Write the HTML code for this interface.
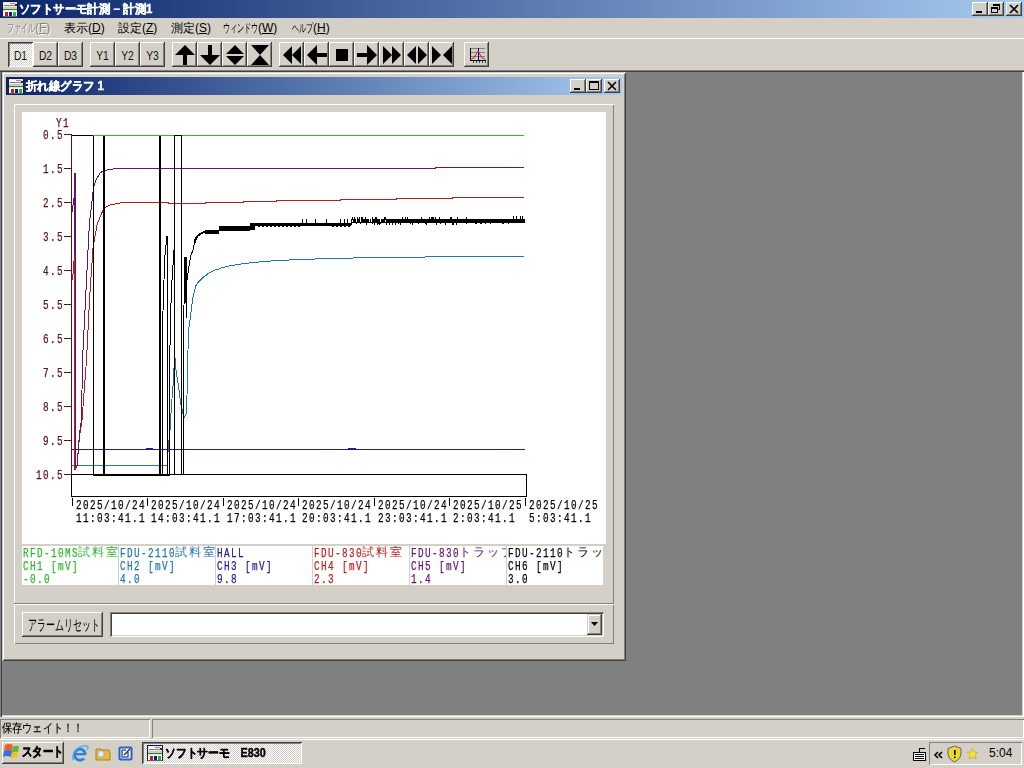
<!DOCTYPE html>
<html><head><meta charset="utf-8">
<style>
*{box-sizing:border-box;margin:0;padding:0}
html,body{width:1024px;height:768px;overflow:hidden;background:#D4D0C8;font-family:"Liberation Sans",sans-serif;font-size:12px;color:#000}
.a{position:absolute}
.title{left:0;top:0;width:1024px;height:18px;background:linear-gradient(to right,#0A246A,#A6CAF0)}
.ttext{color:#fff;font-weight:bold;font-size:12px;line-height:18px;white-space:nowrap;-webkit-text-stroke:0.4px #fff}
.cbtn{width:16px;height:14px;background:#D4D0C8;box-shadow:inset -1px -1px #404040,inset 1px 1px #fff,inset -2px -2px #808080}
.menu{white-space:nowrap;font-size:12px;line-height:14px}
.tb{width:24px;height:24px;background:#D4D0C8;box-shadow:inset -1px -1px #404040,inset 1px 1px #fff,inset -2px -2px #808080;text-align:center;font-size:12px;line-height:24px}
.tbd{background:#eceae6;background-image:repeating-conic-gradient(#fff 0 25%,#D4D0C8 0 50%);background-size:2px 2px;box-shadow:inset 1px 1px #404040,inset -1px -1px #fff,inset 2px 2px #808080}
.mono{font-family:"Liberation Mono",monospace}
.yl{right:962px;font-family:"Liberation Mono",monospace;font-size:13px;letter-spacing:-0.8px;line-height:16px;color:#5A1414;white-space:nowrap;text-align:right}
.xl{font-family:"Liberation Mono",monospace;font-size:13px;letter-spacing:-0.8px;line-height:13px;color:#000;white-space:nowrap}
.lg{top:546px;width:96px;height:39px;overflow:hidden;font-family:"Liberation Mono",monospace;font-size:13px;letter-spacing:-0.8px;line-height:13px;white-space:nowrap}
.j{font-size:13px;letter-spacing:1px}
.tbt{width:25px;height:25px;text-align:center;line-height:25px;font-size:12px;transform:translateY(2px) scaleX(0.86);color:#101010}
.hw{display:inline-block;overflow:visible;white-space:nowrap}
.hw>span{display:inline-block;transform:scaleX(0.6);transform-origin:left}
.mt{font-family:"Liberation Mono",monospace;font-size:13px;letter-spacing:1.92px;line-height:13px;white-space:nowrap;transform:scaleX(0.72);transform-origin:0 0;-webkit-text-stroke:0.25px currentColor}
.jt{font-size:12px;letter-spacing:2px;line-height:13px;white-space:nowrap}
</style></head><body>
<!-- Title bar -->
<div class="a title"></div>
<div class="a" id="appicon" style="left:2px;top:1px;width:16px;height:16px"></div>
<div class="a ttext" style="left:19px;top:0;transform:scaleX(0.95);transform-origin:left">ソフトサーモ計測 − 計測1</div>
<div class="a cbtn" style="left:972px;top:2px"></div>
<div class="a cbtn" style="left:988px;top:2px"></div>
<div class="a cbtn" style="left:1006px;top:2px"></div>

<!-- Menu -->
<div class="a menu" style="left:7px;top:21px;color:#808080;text-shadow:1px 1px #fff"><span class="hw" style="width:7px"><span>フ</span></span><span class="hw" style="width:7px"><span>ァ</span></span><span class="hw" style="width:7px"><span>イ</span></span><span class="hw" style="width:7px"><span>ル</span></span>(<u>F</u>)</div>
<div class="a menu" style="left:64px;top:21px">表示(<u>D</u>)</div>
<div class="a menu" style="left:118px;top:21px">設定(<u>Z</u>)</div>
<div class="a menu" style="left:171px;top:21px">測定(<u>S</u>)</div>
<div class="a menu" style="left:223px;top:21px"><span class="hw" style="width:7px"><span>ウ</span></span><span class="hw" style="width:7px"><span>ィ</span></span><span class="hw" style="width:7px"><span>ン</span></span><span class="hw" style="width:7px"><span>ド</span></span><span class="hw" style="width:7px"><span>ウ</span></span>(<u>W</u>)</div>
<div class="a menu" style="left:292px;top:21px"><span class="hw" style="width:7px"><span>ヘ</span></span><span class="hw" style="width:7px"><span>ル</span></span><span class="hw" style="width:7px"><span>プ</span></span>(<u>H</u>)</div>

<!-- Toolbar -->
<div class="a" style="left:0;top:38px;width:1024px;height:1px;background:#fff"></div>
<div class="a" style="left:0;top:70px;width:1024px;height:1px;background:#808080"></div>
<div class="a" style="left:0;top:71px;width:1024px;height:1px;background:#404040"></div>

<!-- UI -->
<div class="a tbd" style="left:8px;top:42px;width:25px;height:25px"></div>
<div class="a tb" style="left:33px;top:42px;width:25px;height:25px"></div>
<div class="a tb" style="left:58px;top:42px;width:25px;height:25px"></div>
<div class="a tb" style="left:90px;top:42px;width:25px;height:25px"></div>
<div class="a tb" style="left:115px;top:42px;width:25px;height:25px"></div>
<div class="a tb" style="left:140px;top:42px;width:25px;height:25px"></div>
<div class="a tb" style="left:172px;top:42px;width:25px;height:25px"></div>
<div class="a tb" style="left:197px;top:42px;width:25px;height:25px"></div>
<div class="a tb" style="left:222px;top:42px;width:25px;height:25px"></div>
<div class="a tb" style="left:247px;top:42px;width:25px;height:25px"></div>
<div class="a tb" style="left:279px;top:42px;width:25px;height:25px"></div>
<div class="a tb" style="left:304px;top:42px;width:25px;height:25px"></div>
<div class="a tb" style="left:329px;top:42px;width:25px;height:25px"></div>
<div class="a tb" style="left:354px;top:42px;width:25px;height:25px"></div>
<div class="a tb" style="left:379px;top:42px;width:25px;height:25px"></div>
<div class="a tb" style="left:404px;top:42px;width:25px;height:25px"></div>
<div class="a tb" style="left:429px;top:42px;width:25px;height:25px"></div>
<div class="a tb" style="left:464px;top:42px;width:25px;height:25px"></div>
<div class="a tbt" style="left:8px;top:42px">D1</div>
<div class="a tbt" style="left:33px;top:42px">D2</div>
<div class="a tbt" style="left:58px;top:42px">D3</div>
<div class="a tbt" style="left:90px;top:42px">Y1</div>
<div class="a tbt" style="left:115px;top:42px">Y2</div>
<div class="a tbt" style="left:140px;top:42px">Y3</div>
<svg class="a" style="left:0;top:0" width="1024" height="72" viewBox="0 0 1024 72">
<path d="M175,55 L185,45 L195,55 L187,55 L187,65 L183,65 L183,55 Z" fill="#000"/>
<path d="M208,45 L212,45 L212,55 L220,55 L210,65 L200,55 L208,55 Z" fill="#000"/>
<path d="M226,54 L235,45 L244,54 Z M226,56 L244,56 L235,65 Z" fill="#000"/>
<path d="M251,45 L269,45 L260,55 Z M260,55 L269,65 L251,65 Z" fill="#000"/>
<path d="M283,55 L292,46 L292,64 Z M292,55 L301,46 L301,64 Z" fill="#000"/>
<path d="M307,55 L317,45 L317,53 L327,53 L327,57 L317,57 L317,65 Z" fill="#000"/>
<rect x="336" y="49" width="12" height="12" fill="#000"/>
<path d="M357,53 L367,53 L367,45 L377,55 L367,65 L367,57 L357,57 Z" fill="#000"/>
<path d="M383,46 L392,55 L383,64 Z M392,46 L401,55 L392,64 Z" fill="#000"/>
<path d="M407,55 L416,46 L416,64 Z M418,46 L427,55 L418,64 Z" fill="#000"/>
<path d="M432,46 L441,55 L432,64 Z M452,46 L443,55 L452,64 Z" fill="#000"/>
<g shape-rendering="crispEdges">
<line x1="470" y1="48.5" x2="485" y2="48.5" stroke="#808080"/>
<line x1="470" y1="52.5" x2="485" y2="52.5" stroke="#808080"/>
<line x1="470" y1="56.5" x2="485" y2="56.5" stroke="#808080"/>
<line x1="470.5" y1="48" x2="470.5" y2="61" stroke="#000"/>
<line x1="470" y1="60.5" x2="486" y2="60.5" stroke="#000"/>
<line x1="473.5" y1="61" x2="473.5" y2="63" stroke="#404040"/>
<line x1="476.5" y1="61" x2="476.5" y2="63" stroke="#404040"/>
<line x1="479.5" y1="61" x2="479.5" y2="63" stroke="#404040"/>
<line x1="482.5" y1="61" x2="482.5" y2="63" stroke="#404040"/>
<line x1="485.5" y1="61" x2="485.5" y2="63" stroke="#404040"/>
<line x1="478.5" y1="48" x2="478.5" y2="60" stroke="#0000C0"/>
</g>
<path d="M471,59 L474,58 L478,51 L482,58 L485,59" fill="none" stroke="#E02020" stroke-width="1"/>
<rect x="976" y="11" width="6" height="2" fill="#000"/>
<path d="M993.5,4.5 h6 v5 h-2" fill="none" stroke="#000" stroke-width="1" shape-rendering="crispEdges"/><rect x="993" y="4" width="7" height="2" fill="#000"/><rect x="991.5" y="7.5" width="6" height="5" fill="none" stroke="#000" stroke-width="1" shape-rendering="crispEdges"/><rect x="991" y="7" width="7" height="2" fill="#000"/>
<path d="M1010,5 L1018,13 M1018,5 L1010,13" stroke="#000" stroke-width="1.6"/>
</svg>
<!-- /UI -->
<!-- MDI client -->
<div class="a" style="left:0;top:72px;width:1024px;height:645px;background:#808080;box-shadow:inset 1px 0 #808080,inset 2px 0 #404040,inset -1px -1px #fff,inset -2px -2px #D4D0C8"></div>


<!-- Child window -->
<div class="a" style="left:2px;top:72px;width:624px;height:589px;background:#D4D0C8;box-shadow:inset 1px 1px #D4D0C8,inset -1px -1px #404040,inset 2px 2px #fff,inset -2px -2px #808080"></div>
<div class="a" style="left:6px;top:77px;width:616px;height:18px;background:linear-gradient(to right,#0A246A,#A6CAF0)"></div>
<div class="a" id="childicon" style="left:8px;top:78px;width:16px;height:16px"></div>
<div class="a ttext" style="left:25.5px;top:77px;transform:scaleX(0.95);transform-origin:left">折れ線グラフ 1</div>
<div class="a cbtn" style="left:570px;top:79px"></div>
<div class="a cbtn" style="left:586px;top:79px"></div>
<div class="a cbtn" style="left:604px;top:79px"></div>

<!-- chart panel -->
<div class="a" style="left:14px;top:104px;width:600px;height:500px;box-shadow:inset 1px 1px #fff,inset -1px -1px #808080"></div>
<div class="a" style="left:22px;top:112px;width:584px;height:432px;background:#fff"></div>
<!-- legend -->
<div class="a" style="left:22px;top:546px;width:96px;height:39px;background:#fff"></div>
<div class="a" style="left:119px;top:546px;width:96px;height:39px;background:#fff"></div>
<div class="a" style="left:216px;top:546px;width:96px;height:39px;background:#fff"></div>
<div class="a" style="left:313px;top:546px;width:96px;height:39px;background:#fff"></div>
<div class="a" style="left:410px;top:546px;width:96px;height:39px;background:#fff"></div>
<div class="a" style="left:507px;top:546px;width:96px;height:39px;background:#fff"></div>

<!-- CHART -->
<svg class="a" style="left:0;top:0" width="1024" height="768" viewBox="0 0 1024 768" shape-rendering="crispEdges">
<line x1="71.5" y1="134" x2="71.5" y2="475" stroke="#5A1414" stroke-width="1"/>
<line x1="64" y1="134.5" x2="71" y2="134.5" stroke="#5A1414" stroke-width="1"/>
<line x1="64" y1="168.5" x2="71" y2="168.5" stroke="#5A1414" stroke-width="1"/>
<line x1="64" y1="202.5" x2="71" y2="202.5" stroke="#5A1414" stroke-width="1"/>
<line x1="64" y1="236.5" x2="71" y2="236.5" stroke="#5A1414" stroke-width="1"/>
<line x1="64" y1="270.5" x2="71" y2="270.5" stroke="#5A1414" stroke-width="1"/>
<line x1="64" y1="304.5" x2="71" y2="304.5" stroke="#5A1414" stroke-width="1"/>
<line x1="64" y1="338.5" x2="71" y2="338.5" stroke="#5A1414" stroke-width="1"/>
<line x1="64" y1="372.5" x2="71" y2="372.5" stroke="#5A1414" stroke-width="1"/>
<line x1="64" y1="406.5" x2="71" y2="406.5" stroke="#5A1414" stroke-width="1"/>
<line x1="64" y1="440.5" x2="71" y2="440.5" stroke="#5A1414" stroke-width="1"/>
<line x1="64" y1="474.5" x2="71" y2="474.5" stroke="#5A1414" stroke-width="1"/>
<rect x="71.5" y="474.5" width="455" height="22" fill="none" stroke="#000" stroke-width="1"/>
<line x1="72.5" y1="498" x2="72.5" y2="506" stroke="#000" stroke-width="1"/>
<line x1="147.5" y1="498" x2="147.5" y2="506" stroke="#000" stroke-width="1"/>
<line x1="223.5" y1="498" x2="223.5" y2="506" stroke="#000" stroke-width="1"/>
<line x1="298.5" y1="498" x2="298.5" y2="506" stroke="#000" stroke-width="1"/>
<line x1="374.5" y1="498" x2="374.5" y2="506" stroke="#000" stroke-width="1"/>
<line x1="449.5" y1="498" x2="449.5" y2="506" stroke="#000" stroke-width="1"/>
<line x1="525.5" y1="498" x2="525.5" y2="506" stroke="#000" stroke-width="1"/>
<polyline points="72,449.5 525,449.5" fill="none" stroke="#1E1E8C" stroke-width="1" stroke-linejoin="miter" />
<polyline points="348,449 356,449" fill="none" stroke="#1E1E8C" stroke-width="2" stroke-linejoin="miter" />
<polyline points="146,448.5 153,448.5" fill="none" stroke="#1E1E8C" stroke-width="1" stroke-linejoin="miter" />
<polyline points="72,465.5 167.5,465.5 168,452 169,440 170,430 171.5,405 173,386 174,368 175,358 176,370 179,390 181,405 184,418 186,414 187,395 187.5,370 188,350 189,327 191.3,310 192.9,297 196,285.5 198,282.5 200,280.5 202,278.5 204,276.5 206,275.5 208,273.5 210,272.5 212,271.5 214,270.5 216,269.5 218,269.5 220,268.5 222,267.5 224,267.5 226,266.5 228,266.5 230,265.5 232,265.5 234,265.5 236,264.5 238,264.5 240,264.5 242,263.5 244,263.5 246,263.5 248,263.5 250,262.5 252,262.5 254,262.5 256,262.5 258,262.5 260,261.5 262,261.5 264,261.5 266,261.5 268,261.5 270,261.5 272,260.5 274,260.5 276,260.5 278,260.5 280,260.5 282,260.5 284,260.5 286,260.5 288,260.5 290,259.5 292,259.5 294,259.5 296,259.5 298,259.5 300,259.5 302,259.5 304,259.5 306,259.5 308,259.5 310,259.5 312,259.5 314,259.5 316,258.5 318,258.5 320,258.5 322,258.5 324,258.5 326,258.5 328,258.5 330,258.5 332,258.5 334,258.5 336,258.5 338,258.5 340,258.5 342,258.5 344,258.5 346,258.5 348,258.5 350,258.5 352,258.5 354,257.5 356,257.5 358,257.5 360,257.5 362,257.5 364,257.5 366,257.5 368,257.5 370,257.5 372,257.5 374,257.5 376,257.5 378,257.5 380,257.5 382,257.5 384,257.5 386,257.5 388,257.5 390,257.5 392,257.5 394,257.5 396,257.5 398,257.5 400,257.5 402,257.5 404,257.5 406,257.5 408,257.5 410,257.5 412,257.5 414,257.5 416,257.5 418,257.5 420,257.5 422,257.5 424,257.5 426,256.5 428,256.5 430,256.5 432,256.5 434,256.5 436,256.5 438,256.5 440,256.5 442,256.5 444,256.5 446,256.5 448,256.5 450,256.5 452,256.5 454,256.5 456,256.5 458,256.5 460,256.5 462,256.5 464,256.5 466,256.5 468,256.5 470,256.5 472,256.5 474,256.5 476,256.5 478,256.5 480,256.5 482,256.5 484,256.5 486,256.5 488,256.5 490,256.5 492,256.5 494,256.5 496,256.5 498,256.5 500,256.5 502,256.5 504,256.5 506,256.5 508,256.5 510,256.5 512,256.5 514,256.5 516,256.5 518,256.5 520,256.5 522,256.5 524,256.5" fill="none" stroke="#1E78AA" stroke-width="1" stroke-linejoin="miter" />
<polyline points="72.5,280 73.5,268 74.5,254 75,470 77,466 79,440 82,420 86.5,360 89.5,300 93,248 97,225 100,217 104,208 110,205 120,203 140,202.5 168,202.5 168,203.5 205,203.5 206,202.5 243,202.5 243,201.5 276,201.5 276,200.5 340,200.5 340,199.5 396,199.5 396,198.5 452,198.5 452,197.5 524,197.5" fill="none" stroke="#B41E1E" stroke-width="1" stroke-linejoin="miter" />
<polyline points="75,254 75,470" fill="none" stroke="#B41E1E" stroke-width="2" stroke-linejoin="miter" />
<polyline points="72.5,212 73.5,199 74.5,197 75,173 75,254 75,466 77,466 80,430 81.5,420 82.5,360 85.5,300 88.5,240 89.5,222 91,210 92.5,197 93.5,188 96,180 100,173 104,170.5 110,169.5 116,168.5 435,168.5 436,167.5 524,167.5" fill="none" stroke="#64146E" stroke-width="1" stroke-linejoin="miter" />
<polyline points="75,173 75,254" fill="none" stroke="#64146E" stroke-width="2" stroke-linejoin="miter" />
<polyline points="72,135.5 93.5,135.5 93.5,474" fill="none" stroke="#000" stroke-width="1" stroke-linejoin="miter" />
<rect x="103" y="135" width="2" height="340" fill="#000"/>
<rect x="93" y="474" width="77" height="2" fill="#000"/>
<rect x="159" y="135" width="2" height="340" fill="#000"/>
<polyline points="162.5,474 162.5,322 163.5,300 164.5,260 167,236 167.5,250 167.5,474" fill="none" stroke="#000" stroke-width="1" stroke-linejoin="miter" />
<polyline points="169.5,474 169.5,376 170.5,315 172,280 174,250" fill="none" stroke="#000" stroke-width="1" stroke-linejoin="miter" />
<rect x="174" y="135" width="1" height="340" fill="#000"/><rect x="181" y="135" width="1" height="340" fill="#000"/>
<rect x="181" y="474" width="3" height="1" fill="#000"/><rect x="183" y="330" width="1" height="145" fill="#000"/>
<polyline points="183.5,330 184.5,280 185,257 186,303 186.5,318 187,280 189,266 191,255 193,250 194.5,243" fill="none" stroke="#000" stroke-width="1" stroke-linejoin="miter" />
<rect x="185" y="257" width="2" height="46" fill="#000"/>
<polyline points="194.5,243 196,238 198,235.5 200,234 203,232.5 205,231.5" fill="none" stroke="#000" stroke-width="2" stroke-linejoin="miter" />
<rect x="205" y="230" width="14" height="4" fill="#000"/>
<rect x="219" y="226" width="31" height="5" fill="#000"/>
<rect x="250" y="223" width="5" height="7" fill="#000"/>
<rect x="255" y="223" width="96" height="3" fill="#000"/>
<rect x="351" y="219" width="174" height="4" fill="#000"/>
<rect x="302" y="219" width="1" height="4" fill="#000"/>
<rect x="306" y="219" width="1" height="4" fill="#000"/>
<rect x="315" y="219" width="1" height="4" fill="#000"/>
<rect x="326" y="219" width="1" height="4" fill="#000"/>
<rect x="340" y="219" width="1" height="4" fill="#000"/>
<rect x="344" y="219" width="1" height="4" fill="#000"/>
<rect x="347" y="219" width="1" height="4" fill="#000"/>
<rect x="258" y="226" width="2" height="1" fill="#000"/>
<rect x="262" y="226" width="2" height="1" fill="#000"/>
<rect x="266" y="226" width="2" height="1" fill="#000"/>
<rect x="270" y="226" width="2" height="1" fill="#000"/>
<rect x="274" y="226" width="2" height="1" fill="#000"/>
<rect x="278" y="226" width="2" height="1" fill="#000"/>
<rect x="282" y="226" width="2" height="1" fill="#000"/>
<rect x="286" y="226" width="2" height="1" fill="#000"/>
<rect x="290" y="226" width="2" height="1" fill="#000"/>
<rect x="294" y="226" width="2" height="1" fill="#000"/>
<rect x="298" y="226" width="2" height="1" fill="#000"/>
<rect x="332" y="226" width="1" height="1" fill="#000"/>
<rect x="333" y="226" width="1" height="1" fill="#000"/>
<rect x="336" y="226" width="1" height="1" fill="#000"/>
<rect x="337" y="226" width="1" height="1" fill="#000"/>
<rect x="340" y="226" width="1" height="1" fill="#000"/>
<rect x="341" y="226" width="1" height="1" fill="#000"/>
<rect x="344" y="226" width="1" height="1" fill="#000"/>
<rect x="345" y="226" width="1" height="1" fill="#000"/>
<rect x="348" y="226" width="1" height="1" fill="#000"/>
<rect x="349" y="226" width="1" height="1" fill="#000"/>
<rect x="356" y="223" width="1" height="1" fill="#000"/>
<rect x="360" y="223" width="1" height="1" fill="#000"/>
<rect x="372" y="223" width="1" height="1" fill="#000"/>
<rect x="374" y="223" width="1" height="1" fill="#000"/>
<rect x="378" y="223" width="1" height="1" fill="#000"/>
<rect x="380" y="223" width="1" height="1" fill="#000"/>
<rect x="392" y="223" width="1" height="1" fill="#000"/>
<rect x="398" y="223" width="1" height="1" fill="#000"/>
<rect x="410" y="223" width="1" height="1" fill="#000"/>
<rect x="418" y="223" width="1" height="1" fill="#000"/>
<rect x="425" y="223" width="1" height="1" fill="#000"/>
<rect x="440" y="223" width="1" height="1" fill="#000"/>
<rect x="452" y="223" width="1" height="1" fill="#000"/>
<rect x="466" y="223" width="1" height="1" fill="#000"/>
<rect x="476" y="223" width="1" height="1" fill="#000"/>
<rect x="490" y="223" width="1" height="1" fill="#000"/>
<rect x="502" y="223" width="1" height="1" fill="#000"/>
<rect x="352" y="219" width="1" height="3" fill="#fff"/>
<rect x="356" y="219" width="1" height="3" fill="#fff"/>
<rect x="360" y="219" width="1" height="3" fill="#fff"/>
<rect x="369" y="219" width="1" height="3" fill="#fff"/>
<rect x="371" y="219" width="1" height="3" fill="#fff"/>
<rect x="380" y="219" width="1" height="3" fill="#fff"/>
<rect x="385" y="219" width="1" height="3" fill="#fff"/>
<rect x="351" y="223" width="1" height="2" fill="#000"/>
<rect x="352" y="217" width="1" height="3" fill="#000"/>
<rect x="354" y="217" width="1" height="3" fill="#000"/>
<rect x="357" y="217" width="1" height="3" fill="#000"/>
<rect x="359" y="217" width="1" height="3" fill="#000"/>
<rect x="361" y="217" width="1" height="3" fill="#000"/>
<rect x="362" y="217" width="1" height="3" fill="#000"/>
<rect x="365" y="217" width="1" height="3" fill="#000"/>
<rect x="366" y="223" width="1" height="2" fill="#000"/>
<rect x="372" y="217" width="1" height="3" fill="#000"/>
<rect x="374" y="223" width="1" height="2" fill="#000"/>
<rect x="375" y="217" width="1" height="3" fill="#000"/>
<rect x="376" y="217" width="1" height="3" fill="#000"/>
<rect x="377" y="223" width="1" height="2" fill="#000"/>
<rect x="379" y="223" width="1" height="2" fill="#000"/>
<rect x="384" y="217" width="1" height="3" fill="#000"/>
<rect x="385" y="217" width="1" height="3" fill="#000"/>
<rect x="386" y="223" width="1" height="2" fill="#000"/>
<rect x="389" y="223" width="1" height="2" fill="#000"/>
<rect x="392" y="223" width="1" height="2" fill="#000"/>
<rect x="395" y="223" width="1" height="2" fill="#000"/>
<rect x="400" y="223" width="1" height="2" fill="#000"/>
<rect x="402" y="217" width="1" height="3" fill="#000"/>
<rect x="405" y="217" width="1" height="3" fill="#000"/>
<rect x="407" y="217" width="1" height="3" fill="#000"/>
<rect x="412" y="223" width="1" height="2" fill="#000"/>
<rect x="421" y="217" width="1" height="3" fill="#000"/>
<rect x="426" y="223" width="1" height="2" fill="#000"/>
<rect x="429" y="217" width="1" height="3" fill="#000"/>
<rect x="431" y="217" width="1" height="3" fill="#000"/>
<rect x="432" y="217" width="1" height="3" fill="#000"/>
<rect x="433" y="217" width="1" height="3" fill="#000"/>
<rect x="435" y="217" width="1" height="3" fill="#000"/>
<rect x="436" y="223" width="1" height="2" fill="#000"/>
<rect x="439" y="217" width="1" height="3" fill="#000"/>
<rect x="445" y="223" width="1" height="2" fill="#000"/>
<rect x="450" y="217" width="1" height="3" fill="#000"/>
<rect x="451" y="217" width="1" height="3" fill="#000"/>
<rect x="452" y="223" width="1" height="2" fill="#000"/>
<rect x="453" y="223" width="1" height="2" fill="#000"/>
<rect x="456" y="223" width="1" height="2" fill="#000"/>
<rect x="457" y="217" width="1" height="3" fill="#000"/>
<rect x="466" y="217" width="1" height="3" fill="#000"/>
<rect x="475" y="223" width="1" height="1" fill="#000"/>
<rect x="476" y="223" width="1" height="1" fill="#000"/>
<rect x="480" y="223" width="1" height="1" fill="#000"/>
<rect x="481" y="223" width="1" height="1" fill="#000"/>
<rect x="485" y="223" width="1" height="1" fill="#000"/>
<rect x="503" y="223" width="1" height="1" fill="#000"/>
<rect x="508" y="223" width="1" height="1" fill="#000"/>
<rect x="513" y="216" width="1" height="6" fill="#000"/><rect x="516" y="216" width="1" height="6" fill="#000"/><rect x="520" y="216" width="1" height="6" fill="#000"/><rect x="522" y="216" width="1" height="6" fill="#000"/>
<polyline points="93,135.5 524,135.5" fill="none" stroke="#30B830" stroke-width="1" stroke-linejoin="miter" />
<polyline points="174,135.5 181.5,135.5" fill="none" stroke="#000" stroke-width="1" stroke-linejoin="miter" />
</svg>
<div class="a mt" style="left:43px;top:129px;color:#5A1414">0.5</div>
<div class="a mt" style="left:43px;top:163px;color:#5A1414">1.5</div>
<div class="a mt" style="left:43px;top:197px;color:#5A1414">2.5</div>
<div class="a mt" style="left:43px;top:231px;color:#5A1414">3.5</div>
<div class="a mt" style="left:43px;top:265px;color:#5A1414">4.5</div>
<div class="a mt" style="left:43px;top:299px;color:#5A1414">5.5</div>
<div class="a mt" style="left:43px;top:333px;color:#5A1414">6.5</div>
<div class="a mt" style="left:43px;top:367px;color:#5A1414">7.5</div>
<div class="a mt" style="left:43px;top:401px;color:#5A1414">8.5</div>
<div class="a mt" style="left:43px;top:435px;color:#5A1414">9.5</div>
<div class="a mt" style="left:36px;top:469px;color:#5A1414">10.5</div>
<div class="a mt" style="left:56px;top:117px;color:#5A1414">Y1</div>
<div class="a mt" style="left:76px;top:499px;color:#000">2025/10/24</div>
<div class="a mt" style="left:76px;top:512px;color:#000">11:03:41.1</div>
<div class="a mt" style="left:151px;top:499px;color:#000">2025/10/24</div>
<div class="a mt" style="left:151px;top:512px;color:#000">14:03:41.1</div>
<div class="a mt" style="left:227px;top:499px;color:#000">2025/10/24</div>
<div class="a mt" style="left:227px;top:512px;color:#000">17:03:41.1</div>
<div class="a mt" style="left:302px;top:499px;color:#000">2025/10/24</div>
<div class="a mt" style="left:302px;top:512px;color:#000">20:03:41.1</div>
<div class="a mt" style="left:378px;top:499px;color:#000">2025/10/24</div>
<div class="a mt" style="left:378px;top:512px;color:#000">23:03:41.1</div>
<div class="a mt" style="left:453px;top:499px;color:#000">2025/10/25</div>
<div class="a mt" style="left:453px;top:512px;color:#000">2:03:41.1</div>
<div class="a mt" style="left:529px;top:499px;color:#000">2025/10/25</div>
<div class="a mt" style="left:529px;top:512px;color:#000">5:03:41.1</div>
<!-- LEGTEXT -->
<div class="a" style="left:22px;top:546px;width:96px;height:39px;overflow:hidden"><div class="a mt" style="left:1px;top:1px;color:#30B830">RFD-10MS</div><div class="a jt" style="left:56px;top:0;color:#30B830">試料室</div><div class="a mt" style="left:1px;top:14px;color:#30B830">CH1 [mV]</div><div class="a mt" style="left:1px;top:27px;color:#30B830">-0.0</div></div>
<div class="a" style="left:119px;top:546px;width:96px;height:39px;overflow:hidden"><div class="a mt" style="left:1px;top:1px;color:#1E78AA">FDU-2110</div><div class="a jt" style="left:56px;top:0;color:#1E78AA">試料室</div><div class="a mt" style="left:1px;top:14px;color:#1E78AA">CH2 [mV]</div><div class="a mt" style="left:1px;top:27px;color:#1E78AA">4.0</div></div>
<div class="a" style="left:216px;top:546px;width:96px;height:39px;overflow:hidden"><div class="a mt" style="left:1px;top:1px;color:#1E1E8C">HALL</div><div class="a mt" style="left:1px;top:14px;color:#1E1E8C">CH3 [mV]</div><div class="a mt" style="left:1px;top:27px;color:#1E1E8C">9.8</div></div>
<div class="a" style="left:313px;top:546px;width:96px;height:39px;overflow:hidden"><div class="a mt" style="left:1px;top:1px;color:#C01E1E">FDU-830</div><div class="a jt" style="left:49px;top:0;color:#C01E1E">試料室</div><div class="a mt" style="left:1px;top:14px;color:#C01E1E">CH4 [mV]</div><div class="a mt" style="left:1px;top:27px;color:#C01E1E">2.3</div></div>
<div class="a" style="left:410px;top:546px;width:96px;height:39px;overflow:hidden"><div class="a mt" style="left:1px;top:1px;color:#64146E">FDU-830</div><div class="a jt" style="left:49px;top:0;color:#64146E">トラップ</div><div class="a mt" style="left:1px;top:14px;color:#64146E">CH5 [mV]</div><div class="a mt" style="left:1px;top:27px;color:#64146E">1.4</div></div>
<div class="a" style="left:507px;top:546px;width:96px;height:39px;overflow:hidden"><div class="a mt" style="left:1px;top:1px;color:#000">FDU-2110</div><div class="a jt" style="left:56px;top:0;color:#000">トラップ</div><div class="a mt" style="left:1px;top:14px;color:#000">CH6 [mV]</div><div class="a mt" style="left:1px;top:27px;color:#000">3.0</div></div>
<!-- /LEGTEXT -->
<!-- /CHART -->
<!-- bottom panel -->
<div class="a" style="left:14px;top:603px;width:600px;height:41px;box-shadow:inset 0 1px #808080,inset 0 2px #fff,inset 1px 0 #fff,inset -1px -1px #808080"></div>
<div class="a" style="left:22px;top:612px;width:81px;height:25px;background:#D4D0C8;box-shadow:inset -1px -1px #404040,inset 1px 1px #fff,inset -2px -2px #808080"></div>
<div class="a" style="left:110px;top:612px;width:494px;height:25px;background:#fff;box-shadow:inset 1px 1px #808080,inset -1px -1px #fff,inset 2px 2px #404040,inset -2px -2px #D4D0C8"></div>
<div class="a" style="left:587px;top:614px;width:15px;height:21px;background:#D4D0C8;box-shadow:inset -1px -1px #404040,inset 1px 1px #D4D0C8,inset -2px -2px #808080,inset 2px 2px #fff"></div>

<!-- Status bar -->
<div class="a" style="left:0;top:717px;width:1024px;height:21px;background:#D4D0C8"></div>

<!-- Taskbar -->
<div class="a" style="left:0;top:738px;width:1024px;height:1px;background:#D4D0C8"></div>
<div class="a" style="left:0;top:739px;width:1024px;height:1px;background:#fff"></div>
<!-- BOTTOM -->
<svg class="a" style="left:0;top:0" width="1024" height="768" viewBox="0 0 1024 768">
<rect x="574" y="88" width="6" height="2" fill="#000"/>
<rect x="589.5" y="81.5" width="9" height="8" fill="none" stroke="#000" stroke-width="1" shape-rendering="crispEdges"/><rect x="589" y="81" width="10" height="2" fill="#000"/>
<path d="M608,82 L616,90 M616,82 L608,90" stroke="#000" stroke-width="1.6"/>
<path d="M591,622 L598,622 L594.5,626 Z" fill="#000"/>
</svg>
<div class="a" id="arst" style="left:28px;top:612px;line-height:25px;font-size:15px;white-space:nowrap;transform:scaleX(0.6);transform-origin:left">アラームリセット</div>
<div class="a" style="left:0;top:719px;width:150px;height:19px;box-shadow:inset 1px 1px #808080,inset -1px -1px #fff"></div>
<div class="a" style="left:152px;top:719px;width:872px;height:19px;box-shadow:inset 1px 1px #808080,inset -1px -1px #fff"></div>
<div class="a" id="stxt" style="left:2px;top:720px;font-size:12px;line-height:16px;white-space:nowrap;-webkit-text-stroke:0.2px #000;transform:scaleX(0.845);transform-origin:left">保存ウェイト！！</div>
<div class="a" style="left:2px;top:742px;width:62px;height:22px;background:#D4D0C8;box-shadow:inset -1px -1px #404040,inset 1px 1px #fff,inset -2px -2px #808080"></div>
<div class="a" id="start" style="left:21.5px;top:741px;font-weight:bold;font-size:13px;line-height:22px;white-space:nowrap;-webkit-text-stroke:0.5px #000;transform:scaleX(0.8);transform-origin:left">スタート</div>
<div class="a tbd" style="left:142px;top:742px;width:160px;height:22px"></div>
<div class="a" style="left:165px;top:742px;font-weight:bold;font-size:12px;line-height:22px;white-space:nowrap;-webkit-text-stroke:0.4px #000;transform:scaleX(0.9);transform-origin:left">ソフトサーモ　E830</div>
<div class="a" style="left:929px;top:742px;width:93px;height:23px;box-shadow:inset 1px 1px #808080,inset -1px -1px #fff"></div>
<div class="a" style="left:989px;top:742px;font-size:12px;line-height:23px;white-space:nowrap">5:04</div>
<!-- /BOTTOM -->
<!-- ICONS -->
<svg class="a" style="left:0;top:0;pointer-events:none" width="1024" height="768" viewBox="0 0 1024 768">
<g transform="translate(2,1)" shape-rendering="crispEdges">
<rect x="0" y="0" width="16" height="16" fill="#1a1a3a"/>
<rect x="1" y="1" width="14" height="7" fill="#E8E4F0"/>
<rect x="2" y="2" width="6" height="2" fill="#fff"/>
<rect x="8" y="2" width="5" height="1" fill="#9090D0"/>
<rect x="2" y="4" width="5" height="1" fill="#9070A0"/>
<rect x="7" y="4" width="6" height="1" fill="#C08060"/>
<rect x="13" y="3" width="2" height="2" fill="#402040"/>
<rect x="1" y="6" width="14" height="2" fill="#B0E0A0"/>
<rect x="1" y="8" width="14" height="1" fill="#606860"/>
<rect x="1" y="9" width="14" height="1" fill="#E0E0E0"/>
<rect x="1" y="10" width="14" height="5" fill="#fff"/>
<rect x="3" y="11" width="3" height="4" fill="#C02020"/>
<rect x="7" y="11" width="3" height="4" fill="#1010B0"/>
<rect x="11" y="11" width="3" height="4" fill="#20C020"/>
<rect x="1" y="15" width="14" height="1" fill="#606060"/>
</g>
<g transform="translate(8,78)" shape-rendering="crispEdges">
<rect x="0" y="0" width="16" height="16" fill="#1a1a3a"/>
<rect x="1" y="1" width="14" height="7" fill="#E8E4F0"/>
<rect x="2" y="2" width="6" height="2" fill="#fff"/>
<rect x="8" y="2" width="5" height="1" fill="#9090D0"/>
<rect x="2" y="4" width="5" height="1" fill="#9070A0"/>
<rect x="7" y="4" width="6" height="1" fill="#C08060"/>
<rect x="13" y="3" width="2" height="2" fill="#402040"/>
<rect x="1" y="6" width="14" height="2" fill="#B0E0A0"/>
<rect x="1" y="8" width="14" height="1" fill="#606860"/>
<rect x="1" y="9" width="14" height="1" fill="#E0E0E0"/>
<rect x="1" y="10" width="14" height="5" fill="#fff"/>
<rect x="3" y="11" width="3" height="4" fill="#C02020"/>
<rect x="7" y="11" width="3" height="4" fill="#1010B0"/>
<rect x="11" y="11" width="3" height="4" fill="#20C020"/>
<rect x="1" y="15" width="14" height="1" fill="#606060"/>
</g>
<g transform="translate(147,745)" shape-rendering="crispEdges">
<rect x="0" y="0" width="16" height="16" fill="#1a1a3a"/>
<rect x="1" y="1" width="14" height="7" fill="#E8E4F0"/>
<rect x="2" y="2" width="6" height="2" fill="#fff"/>
<rect x="8" y="2" width="5" height="1" fill="#9090D0"/>
<rect x="2" y="4" width="5" height="1" fill="#9070A0"/>
<rect x="7" y="4" width="6" height="1" fill="#C08060"/>
<rect x="13" y="3" width="2" height="2" fill="#402040"/>
<rect x="1" y="6" width="14" height="2" fill="#B0E0A0"/>
<rect x="1" y="8" width="14" height="1" fill="#606860"/>
<rect x="1" y="9" width="14" height="1" fill="#E0E0E0"/>
<rect x="1" y="10" width="14" height="5" fill="#fff"/>
<rect x="3" y="11" width="3" height="4" fill="#C02020"/>
<rect x="7" y="11" width="3" height="4" fill="#1010B0"/>
<rect x="11" y="11" width="3" height="4" fill="#20C020"/>
<rect x="1" y="15" width="14" height="1" fill="#606060"/>
</g>
<g>
<path d="M5,745 Q9,743 13,745 L12,751 Q8,749 4,751 Z" fill="#E8602A"/>
<path d="M13,747 Q16,745 19,746 L18,752 Q15,751 12,753 Z" fill="#60B830"/>
<path d="M4,751 Q8,749 12,751 L11,757 Q7,755 3,757 Z" fill="#3A70D8"/>
<path d="M12,753 Q15,751 18,752 L17,758 Q14,757 11,759 Z" fill="#F0C020"/>
</g>
<g>
<path d="M85.5,754.5 A5.5,5.5 0 1 0 84,758.5" fill="none" stroke="#2A84D8" stroke-width="2.8"/>
<rect x="76" y="753" width="9.5" height="2.4" fill="#2A84D8"/>
<path d="M74,760 Q71,757 75,751 Q80,745 87,746 Q89,747 87,750" fill="none" stroke="#50A8F0" stroke-width="1.3"/>
</g>
<g>
<path d="M96,749 L101,749 L102,750 L109,750 L110,752 L110,760 L96,760 Z" fill="#E8B840" stroke="#A07010" stroke-width="0.8"/>
<circle cx="101" cy="754" r="3.3" fill="#D8ECF8" stroke="#8090A0" stroke-width="0.6"/>
</g>
<g>
<rect x="118.5" y="746.5" width="14" height="14" rx="2" fill="#3060C0"/>
<rect x="120.5" y="748.5" width="10" height="10" rx="1" fill="#fff"/>
<path d="M122,750 L126,750 M122,750 L122,757 L128,757 L128,752" fill="none" stroke="#3060C0" stroke-width="1.5"/>
<path d="M124,755 L130,749" stroke="#202020" stroke-width="1.2"/>
</g>
<g shape-rendering="crispEdges">
<rect x="913.5" y="752.5" width="12" height="8" fill="#fff" stroke="#000"/>
<rect x="915" y="754" width="9" height="1" fill="#000"/><rect x="915" y="756" width="9" height="1" fill="#000"/><rect x="915" y="758" width="9" height="1" fill="#000"/>
<path d="M919.5,752 L919.5,748 L925,748" fill="none" stroke="#000"/>
</g>
<path d="M938,752 L935,755 L938,758 M942,752 L939,755 L942,758" fill="none" stroke="#000" stroke-width="1.6"/>
<g>
<path d="M954.5,746 L961,748.5 L961,753 Q961,759 954.5,762 Q948,759 948,753 L948,748.5 Z" fill="#F0D820" stroke="#506080" stroke-width="1"/>
<rect x="954" y="750" width="1.6" height="5" fill="#000"/><rect x="954" y="756.5" width="1.6" height="1.6" fill="#000"/>
</g>
<path d="M972.5,748 L974,752 L978,752.3 L975,755 L976,759 L972.5,757 L969,759 L970,755 L967,752.3 L971,752 Z" fill="#F8E040" stroke="#C0A020" stroke-width="0.6"/>
</svg>
<!-- /ICONS -->
</body></html>
